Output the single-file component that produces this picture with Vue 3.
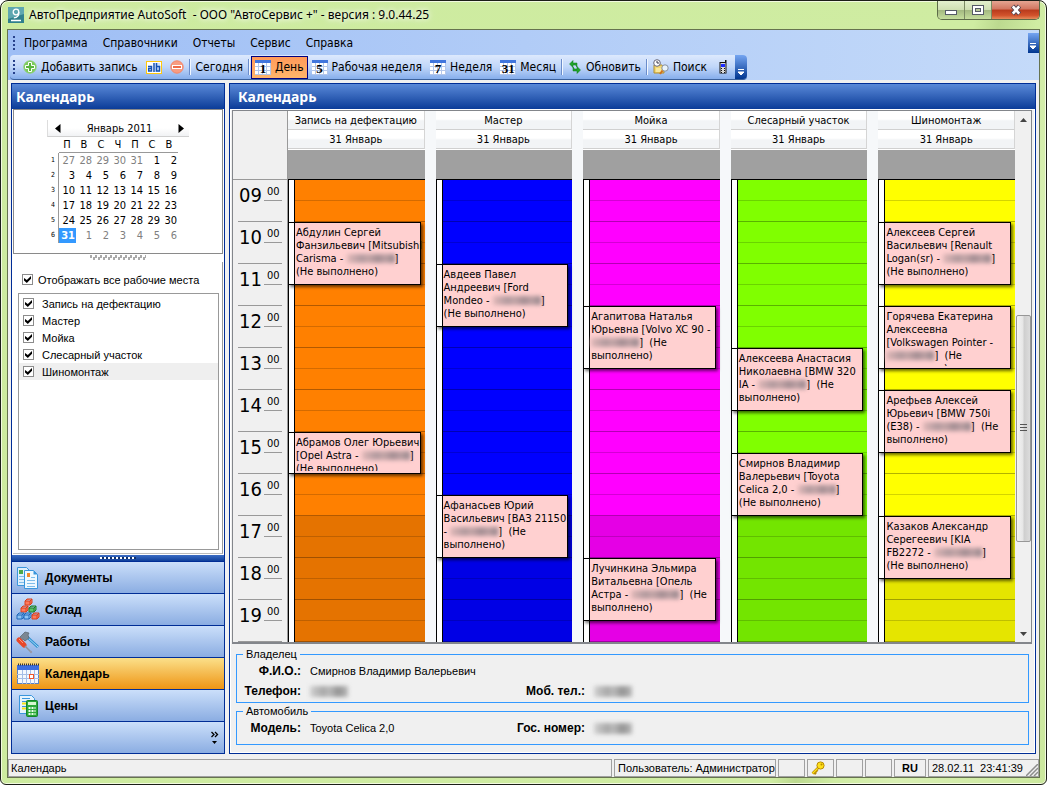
<template>
  <div class="window">
    <header class="title-bar">
      <svg class="app-icon" width="16" height="16" viewBox="0 0 16 16">
        <rect width="16" height="16" fill="#2f7f8c" />
        <path d="M0 0h16v7L0 12z" fill="#5fa7b0" />
        <circle cx="8" cy="5" r="2.800" fill="none" stroke="#fff" stroke-width="1.300" />
        <path d="M10.800 5c.3 3.500-1.500 5.500-5 5.800M3 13.500h10" fill="none" stroke="#fff" stroke-width="1.300" />
      </svg>
      <h1 class="window-title">АвтоПредприятие AutoSoft&nbsp; - ООО "АвтоСервис +" - версия : 9.0.44.25</h1>
      <div class="window-buttons">
        <button class="win-btn" aria-label="Свернуть">
          <svg width="14" height="12" viewBox="0 0 14 12"><rect x="1.500" y="6.500" width="11" height="4" fill="#fff" stroke="#555a66" /></svg>
        </button>
        <button class="win-btn" aria-label="Развернуть">
          <svg width="14" height="12" viewBox="0 0 14 12">
            <rect x="1.500" y="1.500" width="11" height="9" fill="#fff" stroke="#555a66" />
            <rect x="4.500" y="4.500" width="5" height="3" fill="#b9c99a" stroke="#555a66" />
          </svg>
        </button>
        <button class="win-btn win-close" aria-label="Закрыть">
          <svg width="14" height="12" viewBox="0 0 14 12">
            <path d="M3.500 2l7 8M10.500 2l-7 8" stroke="#5b4750" stroke-width="4.500" />
            <path d="M3.800 2.300l6.400 7.400M10.200 2.300l-6.400 7.400" stroke="#fff" stroke-width="2.600" />
          </svg>
        </button>
      </div>
    </header>

    <div class="client">
      <div class="bars">
        <nav class="menu-bar">
          <span class="grip"></span>
          <button v-for="item in menu" :key="item" class="menu-item">{{ item }}</button>
          <button class="overflow menu-overflow" aria-label="Параметры меню">
            <svg width="7" height="7" viewBox="0 0 7 7"><path d="M0 .5h6M0 3h6L3 6z" stroke="#fff" fill="#fff" /></svg>
          </button>
        </nav>
        <div class="tool-bar">
          <span class="grip"></span>
          <button class="tool tool-add">
            <svg width="14" height="14" viewBox="0 0 14 14">
              <circle cx="7" cy="7" r="6.200" fill="#7ccc5a" stroke="#8fce78" />
              <path d="M5.500 2.500h3v3h3v3h-3v3h-3v-3h-3v-3h3z" fill="#58b43a" stroke="#fff" />
            </svg>
            Добавить запись
          </button>
          <button class="tool" aria-label="Изменить">
            <svg width="16" height="13" viewBox="0 0 16 13">
              <rect x=".5" y=".5" width="15" height="12" fill="#fff" stroke="#ffc90e" />
              <path d="M9 2h5v9H9z" fill="#cfe3ff" />
              <path d="M2 5.500h3.500v4.500H2.700v-2.500h2.800M8 2v9M10.500 2v8h3V5.500h-3" fill="none" stroke="#1553b5" stroke-width="1.500" />
            </svg>
          </button>
          <button class="tool" aria-label="Удалить">
            <svg width="14" height="14" viewBox="0 0 14 14">
              <circle cx="7" cy="7" r="6.200" fill="#f79c82" stroke="#f58466" />
              <rect x="2.500" y="5.500" width="9" height="3" fill="#ee6a4a" stroke="#fff" />
            </svg>
          </button>
          <span class="sep"></span>
          <button class="tool tool-today">Сегодня</button>
          <span class="sep"></span>
          <button v-for="view in views" :key="view.day" class="tool" :class="{ active: view.active }">
            <span class="day-icon">{{ view.day }}</span>{{ view.label }}
          </button>
          <span class="sep"></span>
          <button class="tool">
            <svg width="14" height="14" viewBox="0 0 14 14">
              <path d="M1.500 4L5 .5V3h4v4L7.500 5H5v2.500z" fill="#1fa32a" stroke="#0e7a1a" stroke-width=".5" />
              <path d="M12.500 10L9 13.500V11H5V7l1.500 2H9V6.500z" fill="#1fa32a" stroke="#0e7a1a" stroke-width=".5" />
            </svg>
            Обновить
          </button>
          <span class="sep"></span>
          <button class="tool">
            <svg width="16" height="16" viewBox="0 0 16 16">
              <path d="M1 6h8l2 2v6H1z" fill="#f3d873" stroke="#b08d2e" />
              <path d="M3 10h5M3 12h5" stroke="#fff7c8" />
              <circle cx="4" cy="4" r="3.300" fill="#fff" stroke="#667" />
              <path d="M4 2v2h2" fill="none" stroke="#334" />
              <circle cx="12" cy="9" r="3.200" fill="#e8f3fb" stroke="#87909d" />
              <path d="M9.500 11.500L7 15" stroke="#d0711e" stroke-width="2" />
            </svg>
            Поиск
          </button>
          <button class="tool tool-phone" aria-label="Телефон">
            <svg width="8" height="14" viewBox="0 0 8 14">
              <path d="M6 0h1.500v13.500H.5V2H6z" fill="#111" />
              <rect x="1.500" y="3" width="5" height="10" fill="#d8d8d8" />
              <rect x="2" y="4" width="4" height="3" fill="#1a2bff" />
              <path d="M2 8.500h1M5 8.500h1M2 10.500h1M5 10.500h1M2 12.500h1M5 12.500h1" stroke="#111" />
            </svg>
          </button>
          <button class="overflow" aria-label="Параметры панели">
            <svg width="7" height="7" viewBox="0 0 7 7"><path d="M0 .5h6M0 3h6L3 6z" stroke="#fff" fill="#fff" /></svg>
          </button>
        </div>
      </div>

      <main class="workspace">
        <aside class="panel sidebar">
          <h2 class="panel-title">Календарь</h2>
          <div class="month-box">
            <div class="month">
              <div class="month-head">
                <button class="month-arrow" aria-label="Предыдущий месяц">
                  <svg width="6" height="9" viewBox="0 0 6 9"><path d="M5.500 0v9L0 4.500z" /></svg>
                </button>
                <span>Январь 2011</span>
                <button class="month-arrow" aria-label="Следующий месяц">
                  <svg width="6" height="9" viewBox="0 0 6 9"><path d="M.5 0v9L6 4.500z" /></svg>
                </button>
              </div>
              <table class="days">
                <thead>
                  <tr>
                    <td></td>
                    <th v-for="(d, i) in weekDays" :key="i">{{ d }}</th>
                  </tr>
                </thead>
                <tbody>
                  <tr v-for="(week, w) in weeks" :key="w">
                    <td class="week-no">{{ w + 1 }}</td>
                    <td v-for="(d, i) in week" :key="i" :class="{ muted: isMuted(w, d), selected: w === 5 && d === 31 }">{{ d }}</td>
                  </tr>
                </tbody>
              </table>
            </div>
          </div>
          <div class="split-dots"></div>
          <div class="places">
            <label class="check check-all"><input v-model="showAll" type="checkbox">Отображать все рабочие места</label>
            <div class="place-list">
              <label v-for="p in places" :key="p.name" class="check" :class="{ current: p.current }">
                <input v-model="p.checked" type="checkbox">{{ p.name }}
              </label>
            </div>
          </div>
          <div class="nav-split"></div>
          <nav class="nav-list">
            <button class="nav-btn">
              <svg width="24" height="24" viewBox="0 0 24 24">
                <path d="M1.500 1.500h9l3 3v15h-12z" fill="#dff0fc" stroke="#3a96dc" />
                <rect x="3" y="4" width="4" height="4" fill="#4aa84a" />
                <path d="M3 10.500h5M3 13.500h5M3 16.500h5" stroke="#7fbdea" />
                <path d="M8.500 4.500h9l4 4v14h-13z" fill="#eef8ff" stroke="#3a96dc" />
                <path d="M17.500 4.500v4h4z" fill="#3a96dc" />
                <rect x="11" y="7" width="3" height="4" fill="#f28a2a" />
                <path d="M15 11.500h4M11 14.500h8M11 17.500h8M11 20.500h8" stroke="#7fbdea" />
              </svg>
              Документы
            </button>
            <button class="nav-btn">
              <svg width="24" height="24" viewBox="0 0 24 24" stroke-linejoin="round">
                <g v-for="(b, i) in boxes" :key="i" :fill="b.fill" :stroke="b.stroke">
                  <path :d="`M${b.x} ${b.y + 2}l2-2h5v4l-2 2h-5zm0 0h5l2-2m-2 2v4`" />
                </g>
              </svg>
              Склад
            </button>
            <button class="nav-btn">
              <svg width="24" height="24" viewBox="0 0 24 24">
                <path d="M10 6l12 11" stroke="#2f8fd0" stroke-width="3" />
                <path d="M11 7l11 10" stroke="#a6dcf8" />
                <path d="M4 7l5-5 4 1-1 2 1 3-4 3-2-2-2 1z" fill="#7b8793" stroke="#56616c" stroke-width=".7" />
                <path d="M3 10l5 5" stroke="#e8482a" stroke-width="5" stroke-linecap="round" />
                <path d="M3 9l4 4" stroke="#ff9a7a" />
                <path d="M9 16l6 6" stroke="#8c949c" stroke-width="1.500" />
                <circle cx="15" cy="22" r="1.200" fill="#99a" />
              </svg>
              Работы
            </button>
            <button class="nav-btn active">
              <svg width="24" height="24" viewBox="0 0 24 24">
                <rect x="1.500" y="3.500" width="21" height="18" fill="#f4f8fe" stroke="#5b82c4" />
                <rect x="1" y="3" width="22" height="5" fill="#3c6ee0" />
                <path d="M2 2.500h21" stroke="#333" stroke-dasharray="1 1" stroke-width="2" />
                <path d="M6.500 8v14M10.500 8v14M14.500 8v14M18.500 8v14M1 12.500h22M1 16.500h22" stroke="#a5bde6" />
                <rect x="13.500" y="12.500" width="4" height="4" fill="#fff" stroke="#f0552a" />
              </svg>
              Календарь
            </button>
            <button class="nav-btn">
              <svg width="24" height="24" viewBox="0 0 24 24">
                <path d="M3.500 1.500h12l3 3v15h-15z" fill="#e6f4fd" stroke="#3a96dc" />
                <path d="M6 4.500h8M6 7.500h5M6 12.500h4" stroke="#3a96dc" />
                <path d="M6 9.500h5M6 14.500h4" stroke="#f4e21a" stroke-width="2" />
                <rect x="10.500" y="6.500" width="11" height="16" rx="1" fill="#2aa838" stroke="#14842a" />
                <rect x="12" y="8" width="8" height="3" fill="#d6f7d0" />
                <path d="M12.500 14h7M12.500 17h7M12.500 20h7" stroke="#eaffea" stroke-width="2" stroke-dasharray="2 1" />
              </svg>
              Цены
            </button>
            <div class="nav-more">
              <button aria-label="Настройка кнопок">
                <svg width="8" height="14" viewBox="0 0 8 14">
                  <path d="M.5 1l2.500 2.500L.5 6M4 1l2.500 2.500L4 6" fill="none" stroke="#000" stroke-width="1.300" />
                  <path d="M1 10h5l-2.500 3z" />
                </svg>
              </button>
            </div>
          </nav>
        </aside>

        <section class="panel content">
          <h2 class="panel-title">Календарь</h2>
          <div class="content-body">
            <div class="schedule">
              <div class="hours">
                <div class="hours-head"></div>
                <div v-for="h in hours" :key="h" class="hour">
                  <span class="hour-num">{{ h }}</span>
                  <span class="hour-min">00</span>
                </div>
              </div>
              <div class="columns">
                <div v-for="col in columns" :key="col.name" class="column">
                  <div class="col-head">{{ col.name }}</div>
                  <div class="col-head">31 Январь</div>
                  <div class="all-day"></div>
                  <div class="slots" :class="col.color">
                    <article v-for="c in col.cards" :key="c.start" class="card" :style="{ gridRow: `${c.start} / span ${c.span}` }">
                      <p class="card-text">{{ c.before }}<span class="plate" :class="{ short: c.short }"></span>{{ c.after }}</p>
                    </article>
                  </div>
                </div>
              </div>
              <div class="scroll">
                <button class="scroll-arrow" aria-label="Вверх">
                  <svg width="7" height="4" viewBox="0 0 7 4"><path d="M0 4h7L3.500 0z" fill="#444" /></svg>
                </button>
                <div class="scroll-track"><div class="scroll-thumb"></div></div>
                <button class="scroll-arrow" aria-label="Вниз">
                  <svg width="7" height="4" viewBox="0 0 7 4"><path d="M0 0h7L3.500 4z" fill="#444" /></svg>
                </button>
              </div>
            </div>

            <fieldset class="info">
              <legend>Владелец</legend>
              <dl>
                <dt>Ф.И.О.:</dt>
                <dd class="wide">Смирнов Владимир Валерьевич</dd>
                <dt>Телефон:</dt>
                <dd><span class="plate gray"></span></dd>
                <dt>Моб. тел.:</dt>
                <dd><span class="plate gray"></span></dd>
              </dl>
            </fieldset>
            <fieldset class="info car">
              <legend>Автомобиль</legend>
              <dl>
                <dt>Модель:</dt>
                <dd>Toyota Celica 2,0</dd>
                <dt>Гос. номер:</dt>
                <dd><span class="plate gray"></span></dd>
              </dl>
            </fieldset>
          </div>
        </section>
      </main>

      <footer class="status-bar">
        <span class="status grow">Календарь</span>
        <span class="status user">Пользователь: Администратор</span>
        <span class="status small"></span>
        <span class="status small">
          <svg width="14" height="14" viewBox="0 0 14 14">
            <path d="M7.500 6.500L1.500 12.500M3 11l2 2M5 9l1.500 1.500" stroke="#b98a00" stroke-width="2.500" />
            <path d="M7.500 6.500L1.500 12.500" stroke="#ffe11a" stroke-width="1.300" />
            <circle cx="9.500" cy="4.500" r="3.600" fill="#ffe11a" stroke="#b98a00" />
            <circle cx="10.500" cy="3.500" r="1" fill="#b98a00" />
          </svg>
        </span>
        <span class="status small"></span>
        <span class="status small"></span>
        <span class="status lang">RU</span>
        <span class="status clock">28.02.11&nbsp; 23:41:39
          <svg class="resize" width="12" height="12" viewBox="0 0 12 12"><path d="M0 12L12 0M4 12l8-8M8 12l4-4" stroke="#8c8c8c" stroke-width="1.500" /></svg>
        </span>
      </footer>
    </div>
  </div>
</template>

<script setup>
import { ref, reactive } from 'vue'

const menu = ['Программа', 'Справочники', 'Отчеты', 'Сервис', 'Справка']

const views = [
  { day: '1', label: 'День', active: true },
  { day: '5', label: 'Рабочая неделя' },
  { day: '7', label: 'Неделя' },
  { day: '31', label: 'Месяц' }
]

const weekDays = ['П', 'В', 'С', 'Ч', 'П', 'С', 'В']
const weeks = [
  [27, 28, 29, 30, 31, 1, 2],
  [3, 4, 5, 6, 7, 8, 9],
  [10, 11, 12, 13, 14, 15, 16],
  [17, 18, 19, 20, 21, 22, 23],
  [24, 25, 26, 27, 28, 29, 30],
  [31, 1, 2, 3, 4, 5, 6]
]

// дни соседних месяцев
const isMuted = (week, day) => (week === 0 && day > 20) || (week === 5 && day < 20)

const showAll = ref(true)
const places = reactive([
  { name: 'Запись на дефектацию', checked: true },
  { name: 'Мастер', checked: true },
  { name: 'Мойка', checked: true },
  { name: 'Слесарный участок', checked: true },
  { name: 'Шиномонтаж', checked: true, current: true }
])

const red = { fill: '#ff7a5c', stroke: '#d8401e' }
const green = { fill: '#5cc46a', stroke: '#1c7a2c' }
const blue = { fill: '#8cc4f4', stroke: '#1f66b8' }
const boxes = [
  { x: 9, y: 1, ...red },
  { x: 5, y: 8, ...red },
  { x: 13, y: 8, ...green },
  { x: 1, y: 15, ...blue },
  { x: 8, y: 15, ...blue },
  { x: 16, y: 15, ...red }
]

const hours = ['09', '10', '11', '12', '13', '14', '15', '16', '17', '18', '19']

// start - номер получасовой строки, span - длительность в получасах
const columns = [
  {
    name: 'Запись на дефектацию',
    color: 'orange',
    cards: [
      { start: 3, span: 3, before: 'Абдулин Сергей\nФанзильевич [Mitsubishi\nCarisma - ', after: ']\n(Не выполнено)' },
      { start: 13, span: 2, before: 'Абрамов Олег Юрьевич\n[Opel Astra - ', after: ']\n(Не выполнено)' }
    ]
  },
  {
    name: 'Мастер',
    color: 'blue',
    cards: [
      { start: 5, span: 3, before: 'Авдеев Павел\nАндреевич [Ford\nMondeo - ', after: ']\n(Не выполнено)' },
      { start: 16, span: 3, before: 'Афанасьев Юрий\nВасильевич [ВАЗ 21150\n- ', after: ']  (Не\nвыполнено)' }
    ]
  },
  {
    name: 'Мойка',
    color: 'magenta',
    cards: [
      { start: 7, span: 3, before: 'Агапитова Наталья\nЮрьевна [Volvo XC 90 -\n', after: ']  (Не\nвыполнено)' },
      { start: 19, span: 3, before: 'Лучинкина Эльмира\nВитальевна [Опель\nАстра - ', after: ']  (Не\nвыполнено)' }
    ]
  },
  {
    name: 'Слесарный участок',
    color: 'green',
    cards: [
      { start: 9, span: 3, before: 'Алексеева Анастасия\nНиколаевна [BMW 320\nIA - ', after: ']  (Не\nвыполнено)' },
      { start: 14, span: 3, short: true, before: 'Смирнов Владимир\nВалерьевич [Toyota\nCelica 2,0 - ', after: ']\n(Не выполнено)' }
    ]
  },
  {
    name: 'Шиномонтаж',
    color: 'yellow',
    cards: [
      { start: 3, span: 3, before: 'Алексеев Сергей\nВасильевич [Renault\nLogan(sr) - ', after: ']\n(Не выполнено)' },
      { start: 7, span: 3, before: 'Горячева Екатерина\nАлексеевна\n[Volkswagen Pointer -\n', after: ']  (Не\nвыполнено)' },
      { start: 11, span: 3, before: 'Арефьев Алексей\nЮрьевич [BMW 750i\n(E38) - ', after: ']  (Не\nвыполнено)' },
      { start: 17, span: 3, before: 'Казаков Александр\nСерегеевич [KIA\nFB2272 - ', after: ']\n(Не выполнено)' }
    ]
  }
]
</script>

<style>
body {
  margin: 0;
  background: #fff;
}
</style>

<style scoped>
* {
  box-sizing: border-box;
}

.window {
  display: flex;
  flex-direction: column;
  min-height: 100vh;
  padding: 0 6px 6px;
  border: 1px solid #1c1f18;
  border-radius: 8px 8px 6px 6px;
  background: linear-gradient(105deg, #cdeb9f 0%, #cfeca2 78%, #bcd98f 80%, #cfeca2 83%, #d8efb2 88%, #cbe89d 100%);
  box-shadow: inset 0 0 0 1px #f2fae0;
  font-family: "DejaVu Sans Condensed", "Noto Sans", sans-serif;
  font-size: 11px;
  color: #000;
}

button {
  padding: 0;
  border: 0;
  background: none;
  font: inherit;
  color: inherit;
}

svg {
  display: block;
  flex: none;
}

h1,
h2,
p,
dl,
dd {
  margin: 0;
}

/* Заголовок окна */
.title-bar {
  display: flex;
  align-items: center;
  height: 28px;
  padding-left: 1px;
}

.window-title {
  flex: 1;
  padding-left: 5px;
  font: 12px/16px "Noto Sans", "Open Sans", sans-serif;
  text-shadow: 0 0 5px #fff, 0 0 8px #fff;
}

.window-buttons {
  display: flex;
  align-self: flex-start;
  height: 19px;
  border: 1px solid #5d6b48;
  border-top: 0;
  border-radius: 0 0 5px 5px;
  overflow: hidden;
}

.win-btn {
  display: flex;
  align-items: center;
  justify-content: center;
  width: 27px;
  border-right: 1px solid #7b8a63;
  background: linear-gradient(#e3efcd 0%, #cfdfb2 48%, #a4b981 52%, #c5dd9c 100%);
}

.win-close {
  width: 47px;
  border-right: 0;
  background: linear-gradient(#e5a592 0%, #d27660 45%, #b83a1c 50%, #d2532c 80%, #e58b5b 100%);
}

.client {
  display: flex;
  flex: 1;
  flex-direction: column;
  border: 1px solid #66734f;
  background: #f0f0f0;
}

/* Меню и панель инструментов */
.bars {
  background: linear-gradient(90deg, #9ebef5, #c4daf9);
}

.menu-bar,
.tool-bar {
  display: flex;
  align-items: center;
  font-size: 12px;
}

.menu-bar {
  height: 25px;
  padding-left: 5px;
  gap: 15px;
}

.menu-bar .grip {
  margin-right: -7px;
}

.grip {
  width: 3px;
  height: 14px;
  background: repeating-linear-gradient(#27418c 0 2px, transparent 2px 4px) 0 0 / 2px 14px no-repeat;
}

.overflow {
  display: flex;
  align-items: flex-end;
  justify-content: center;
  padding-bottom: 3px;
  background: linear-gradient(#75a5f1, #00358f);
}

.menu-overflow {
  width: 11px;
  height: 20px;
  margin-left: auto;
}

.tool-bar {
  width: max-content;
  height: 25px;
  margin-left: 2px;
  padding-left: 3px;
  border-bottom: 1px solid #3b619c;
  border-radius: 4px;
  background: linear-gradient(#dde9fd, #c0d6f9 50%, #86aeec);
}

.tool-bar .overflow {
  align-self: stretch;
  width: 12px;
  border-radius: 0 4px 4px 0;
}

.tool {
  display: flex;
  align-items: center;
  gap: 4px;
  height: 23px;
  padding: 0 3px;
  border: 1px solid transparent;
  white-space: nowrap;
}

.tool-add {
  margin-left: 3px;
}

.tool.active {
  border-color: #000080;
  background: linear-gradient(#ff9a5a, #ffb56a);
}

.tool-phone {
  padding: 0 7px;
}

.sep {
  width: 2px;
  height: 16px;
  margin: 0 1px;
  border-left: 1px solid #6a8ccb;
  border-right: 1px solid #f1f7ff;
}

.day-icon {
  width: 16px;
  height: 15px;
  border-top: 3px solid #4176dd;
  background:
    repeating-linear-gradient(90deg, transparent 0 3px, #b3c6ea 3px 4px),
    repeating-linear-gradient(#fff 0 3px, #b3c6ea 3px 4px);
  font: bold 13px/12px "Liberation Serif", serif;
  text-align: center;
}

/* Панели */
.workspace {
  display: flex;
  flex: 1;
  gap: 4px;
  padding: 3px 3px 5px;
}

.panel {
  display: flex;
  flex-direction: column;
  border: 1px solid #002d96;
}

.panel-title {
  height: 25px;
  padding-left: 4px;
  background: linear-gradient(#5a89d8, #0b3c98);
  color: #fff;
  font: bold 14px/25px "Noto Sans", "Open Sans", sans-serif;
}

.content .panel-title {
  padding-left: 8px;
}

.sidebar {
  width: 214px;
  flex: none;
  background: #fff;
  font-family: "Liberation Sans", Arial, sans-serif;
}

.month-box {
  height: 145px;
  margin: 0 1px;
  padding-top: 10px;
  border: 1px solid #8a8a8a;
  font-family: "DejaVu Sans Condensed", "Noto Sans", sans-serif;
}

.month {
  width: 142px;
  margin-left: 33px;
}

.month-head {
  display: flex;
  align-items: center;
  justify-content: space-between;
  height: 17px;
  padding: 0 5px 0 7px;
  border-left: 1px solid #ddd;
  border-bottom: 1px solid #d0d0d0;
  background: linear-gradient(#fff 50%, #f1f2f4);
}

.days {
  border-collapse: separate;
  border-spacing: 0;
  table-layout: fixed;
  width: 131px;
}

.days td,
.days th {
  height: 15px;
  padding: 0 1px 0 0;
  line-height: 15px;
  text-align: right;
  font-weight: normal;
}

.days th {
  height: 16px;
  border-bottom: 1px solid #999;
  text-align: center;
}

.days tr > :first-child {
  width: 12px;
}

.days .week-no {
  padding-right: 3px;
  border-right: 1px solid #999;
  font-size: 7px;
}

.days .muted {
  color: #808080;
}

.days .selected {
  background: #3399ff;
  color: #fff;
  font-weight: bold;
}

.split-dots {
  width: 56px;
  height: 5px;
  margin: 1px auto 2px;
  background: conic-gradient(transparent 25%, #aaa 0 50%, transparent 0 75%, #aaa 0) 0 0 / 5px 5px;
}

.places {
  display: flex;
  flex: 1;
  flex-direction: column;
  margin: 0 1px 1px;
  padding: 9px 3px 3px 5px;
  border-right: 1px solid #999;
  border-bottom: 1px solid #bbb;
}

.check {
  display: flex;
  align-items: center;
  gap: 8px;
  height: 17px;
  padding-left: 4px;
  white-space: nowrap;
}

.check input {
  display: grid;
  place-items: center;
  appearance: none;
  flex: none;
  width: 11px;
  height: 11px;
  margin: 0;
  border: 1px solid #8c8c8c;
  background: #fff;
}

.check input:checked::after {
  content: "";
  width: 7px;
  height: 7px;
  background: #000;
  clip-path: polygon(0 30%, 40% 58%, 100% 0, 100% 40%, 40% 100%, 0 65%);
}

.check-all {
  gap: 5px;
}

.check.current {
  background: #efefef;
}

.place-list {
  flex: 1;
  margin-top: 5px;
  padding-top: 1px;
  border: 1px solid #999;
}

.nav-split {
  display: flex;
  align-items: center;
  justify-content: center;
  height: 6px;
  background: linear-gradient(#3c6dc4, #0f3f9a);
}

.nav-split::after {
  content: "";
  width: 36px;
  height: 2px;
  background: repeating-linear-gradient(90deg, #fff 0 2px, #0f2f6a 2px 4px);
}

.nav-btn,
.nav-more {
  display: flex;
  align-items: center;
  width: 100%;
  height: 32px;
  padding: 0 5px;
  border-top: 1px solid #002d96;
  background: linear-gradient(#cbdffa, #8bade2);
}

.nav-btn {
  gap: 5px;
  padding-left: 4px;
  font-size: 12px;
  font-weight: bold;
}

.nav-btn.active {
  background: linear-gradient(#fbe08a, #ee9515);
}

.nav-more {
  justify-content: flex-end;
}

/* Расписание */
.content {
  flex: 1;
  min-width: 0;
  background: #fff;
}

.content-body {
  flex: 1;
  margin: 1px;
  padding-bottom: 4px;
  background: #f0f0f0;
}

.schedule {
  display: flex;
  margin: 0 2px 4px 1px;
  border: 1px solid #83868b;
  border-bottom-width: 2px;
}

.hours {
  width: 55px;
  flex: none;
  border-right: 1px solid #999;
}

.hours-head {
  height: 69px;
  border-bottom: 1px solid #999;
}

.hour {
  display: flex;
  align-items: flex-start;
  justify-content: flex-end;
  gap: 2px;
  height: 42px;
  margin: 0 5px;
  border-bottom: 1px solid #999;
}

.hour-num {
  padding-top: 3px;
  font-size: 20px;
  line-height: 24px;
}

.hour-min {
  width: 18px;
  height: 21px;
  padding-left: 3px;
  border-bottom: 1px solid #999;
  line-height: 24px;
}

.columns {
  display: flex;
  flex: 1;
  gap: 11px;
  min-width: 0;
  background: #f6f8fa;
}

.column {
  flex: 1;
  min-width: 0;
}

.col-head {
  height: 19px;
  border-right: 1px solid #d5d5d5;
  border-bottom: 1px solid #d0d0d0;
  background: linear-gradient(#fff 45%, #f2f4f6 55%);
  line-height: 20px;
  text-align: center;
  white-space: nowrap;
}

.all-day {
  height: 31px;
  border-top: 1px solid #fff;
  border-bottom: 1px solid #000;
  background: #a0a0a0;
}

.slots {
  display: grid;
  grid-template-rows: repeat(22, 21px);
  padding-right: 4px;
  background:
    linear-gradient(90deg, #000 0 1px, #fff 1px 6px, #000 6px 7px, transparent 7px),
    repeating-linear-gradient(transparent 0 20px, rgba(0, 0, 0, 0.17) 20px 21px, transparent 21px 41px, rgba(0, 0, 0, 0.3) 41px 42px),
    linear-gradient(transparent 336px, rgba(0, 0, 0, 0.1) 336px);
}

.slots.orange {
  background-color: #ff8000;
}

.slots.blue {
  background-color: #0000ff;
}

.slots.magenta {
  background-color: #ff00ff;
}

.slots.green {
  background-color: #80ff00;
}

.slots.yellow {
  background-color: #ffff00;
}

.card {
  min-width: 0;
  padding: 3px 0 2px 7px;
  border: 1px solid #000;
  background: linear-gradient(90deg, #fff 0 5px, #000 5px 6px, #ffd0d0 6px);
  box-shadow: 2px 2px 3px rgba(0, 0, 0, 0.6);
}

.card-text {
  height: 100%;
  overflow-x: visible;
  overflow-y: clip;
  line-height: 13px;
  white-space: pre;
}

.plate {
  display: inline-block;
  width: 48px;
  height: 9px;
  background: linear-gradient(90deg, #e0b8b8, #b29a9e 30%, #c4a5a7 45%, #a48e93 65%, #bca0a3 80%, #96868c);
  filter: blur(2px);
  vertical-align: -1px;
}

.plate.short {
  width: 38px;
}

.plate.gray {
  width: 38px;
  height: 11px;
  background: linear-gradient(90deg, #d0d0d0, #a8a8a8 35%, #bababa 50%, #949494 75%, #b8b8b8);
  vertical-align: -2px;
}

.scroll {
  display: flex;
  flex-direction: column;
  width: 16px;
  flex: none;
  background: #f0f0f0;
}

.scroll-arrow {
  display: grid;
  place-items: center;
  height: 17px;
}

.scroll-track {
  display: flex;
  flex: 1;
  flex-direction: column;
}

.scroll-track::before {
  content: "";
  flex: 188 0 0;
}

.scroll-track::after {
  content: "";
  flex: 84 0 0;
}

.scroll-thumb {
  flex: 226 0 0;
  margin: 0 0 0 1px;
  border: 1px solid #979797;
  border-radius: 2px;
  background:
    repeating-linear-gradient(#555 0 1px, transparent 1px 3px) center / 7px 9px no-repeat,
    linear-gradient(90deg, #f4f4f4, #e6e6e6 45%, #cfcfcf 55%, #dcdcdc);
}

/* Сведения о клиенте */
.info {
  min-width: 0;
  margin: 0 5px 2px;
  padding: 0 0 1px;
  border: 1px solid #3399ff;
  font-family: "Liberation Sans", Arial, sans-serif;
}

.info.car {
  padding-bottom: 6px;
}

.info legend {
  margin-left: 6px;
  padding: 0 3px;
  line-height: 13px;
}

.info dl {
  display: grid;
  grid-template-columns: 64px 210px 74px 1fr;
  line-height: 20px;
}

.info dt {
  font-size: 12px;
  font-weight: bold;
  text-align: right;
}

.info dd {
  padding-left: 9px;
}

.info .wide {
  grid-column: span 3;
}

/* Строка состояния */
.status-bar {
  display: flex;
  gap: 2px;
  height: 18px;
  font: 11px/16px "Liberation Sans", Arial, sans-serif;
}

.status {
  display: flex;
  align-items: center;
  overflow: hidden;
  padding: 0 3px;
  border: 1px solid #a0a0a0;
  white-space: nowrap;
}

.status.grow {
  flex: 1;
  padding-left: 2px;
}

.status.user {
  width: 162px;
}

.status.small {
  width: 27px;
}

.status.lang {
  width: 32px;
  justify-content: center;
  font-weight: bold;
}

.status.clock {
  width: 111px;
  justify-content: space-between;
  padding-right: 0;
}

.resize {
  align-self: flex-end;
}
</style>
